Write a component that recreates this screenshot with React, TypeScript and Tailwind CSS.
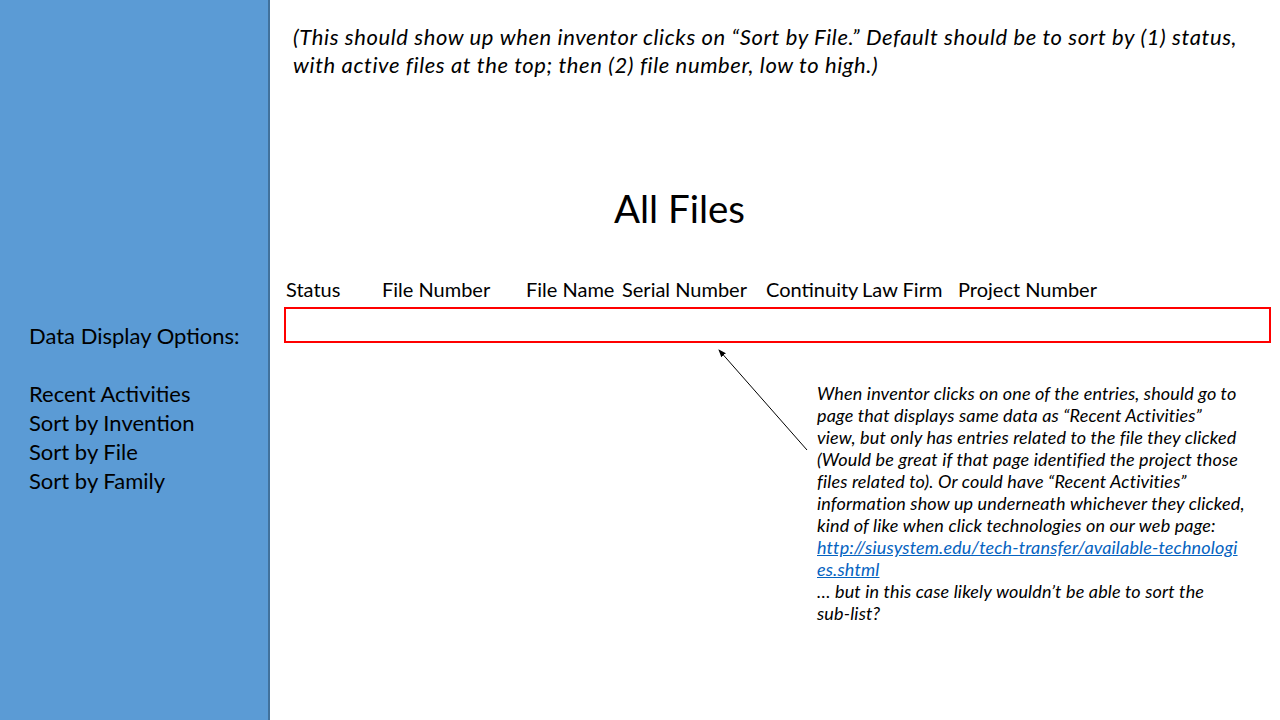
import React from "react";

export default function App() {
  const headers: [string, string][] = [
    ["Status", "w-[96px]"],
    ["File Number", "w-[144px]"],
    ["File Name", "w-[96px]"],
    ["Serial Number", "w-[144px]"],
    ["Continuity", "w-[96px]"],
    ["Law Firm", "w-[96px]"],
    ["Project Number", "w-[160px]"],
  ];
  return (
    <div
      className="flex h-[720px] w-[1280px] overflow-hidden bg-white text-black"
      style={{ fontFamily: "Lato, 'Open Sans', sans-serif" }}
    >
      <aside className="flex w-[270px] shrink-0 flex-col border-r-2 border-[#41719c] bg-[#5b9bd5] pl-[29px] pt-[321px] text-[22px] leading-[29px]">
        <div>Data Display Options:</div>
        <div className="h-[29px]" />
        <div>Recent Activities</div>
        <div>Sort by Invention</div>
        <div>Sort by File</div>
        <div>Sort by Family</div>
      </aside>
      <main className="relative flex flex-1 flex-col">
        <p className="pl-[23px] pt-[23px] text-[22px] italic leading-[28px] tracking-[0.6px]">
          (This should show up when inventor clicks on “Sort by File.” Default should be to sort by (1) status,
          <br />
          with active files at the top; then (2) file number, low to high.)
        </p>
        <h1 className="mt-[107px] pl-[344px] text-[38.5px] leading-[44px]">All Files</h1>
        <div className="mt-[47px] flex pl-[16px] text-[20px] leading-[24px]">
          {headers.map(([h, w]) => (
            <div key={h} className={w}>
              {h}
            </div>
          ))}
        </div>
        <div className="ml-[14px] mt-[6px] h-[36px] w-[987px] border-2 border-[#ff0000]" />
        <div className="ml-[547px] mt-[39px] text-[18px] italic leading-[22px] tracking-[0.15px]">
          When inventor clicks on one of the entries, should go to
          <br />
          page that displays same data as “Recent Activities”
          <br />
          view, but only has entries related to the file they clicked
          <br />
          (Would be great if that page identified the project those
          <br />
          files related to). Or could have “Recent Activities”
          <br />
          information show up underneath whichever they clicked,
          <br />
          kind of like when click technologies on our web page:
          <br />
          <a className="text-[#0563c1] underline" href="#">
            http://siusystem.edu/tech-transfer/available-technologi
            <br />
            es.shtml
          </a>
          <br />
          … but in this case likely wouldn’t be able to sort the
          <br />
          sub-list?
        </div>
        <svg className="pointer-events-none absolute inset-0 h-full w-full" viewBox="0 0 1010 720">
          <defs>
            <marker id="ah" markerWidth="8" markerHeight="8" refX="7" refY="4" orient="auto" markerUnits="userSpaceOnUse">
              <path d="M0,1 L8,4 L0,7 Z" fill="#000" />
            </marker>
          </defs>
          <line x1="537" y1="450" x2="449" y2="350" stroke="#000" strokeWidth="1" markerEnd="url(#ah)" />
        </svg>
      </main>
    </div>
  );
}
